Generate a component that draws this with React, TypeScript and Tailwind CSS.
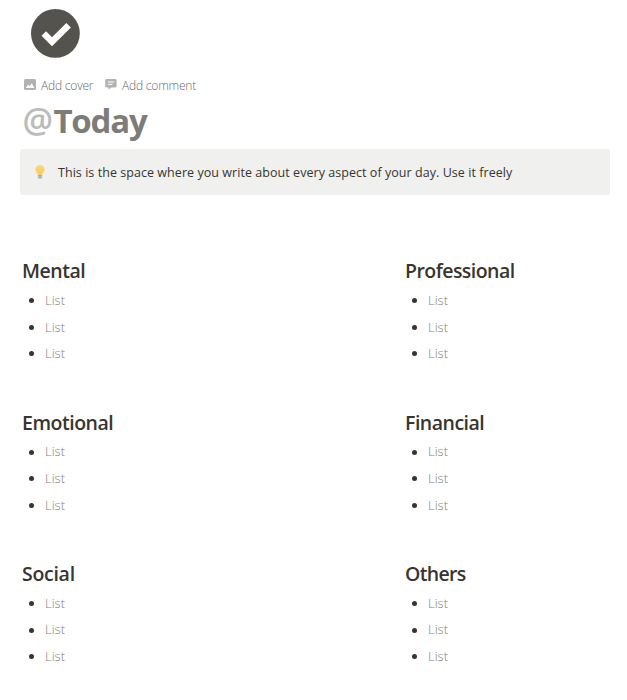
import React from "react";

type Section = {
  title: string;
  titleClass: string;
  items: string[];
};

const leftSections: Section[] = [
  { title: "Mental", titleClass: "tracking-[-0.45px]", items: ["List", "List", "List"] },
  { title: "Emotional", titleClass: "tracking-[-0.48px]", items: ["List", "List", "List"] },
  { title: "Social", titleClass: "tracking-[-0.28px]", items: ["List", "List", "List"] },
];

const rightSections: Section[] = [
  { title: "Professional", titleClass: "tracking-[-0.54px]", items: ["List", "List", "List"] },
  { title: "Financial", titleClass: "tracking-[-0.5px]", items: ["List", "List", "List"] },
  { title: "Others", titleClass: "tracking-[-0.65px]", items: ["List", "List", "List"] },
];

const CheckIcon = () => (
  <svg className="block h-[50px] w-[50px]" viewBox="0 0 50 50">
    <circle cx="25.4" cy="25.4" r="24.4" fill="#55534e" />
    <path d="M13.8 25.6 L22 33.8 L38.6 17.2" fill="none" stroke="#fff" strokeWidth="6.4" />
  </svg>
);

const CoverIcon = () => (
  <svg className="block h-[11px] w-3" viewBox="0 0 12 11">
    <rect width="12" height="11" rx="1.5" fill="#b3b2b0" />
    <path d="M1.8 9 L4.2 5.4 L5.8 7.3 L7.8 4.2 L10.4 9 Z" fill="#fff" />
  </svg>
);

const CommentIcon = () => (
  <svg className="block h-[11px] w-3" viewBox="0 0 12 11">
    <path
      d="M1.6 0 H10.2 Q11.6 0 11.6 1.4 V7 Q11.6 8.4 10.2 8.4 H6.3 L3.6 10.8 V8.4 H1.6 Q0.2 8.4 0.2 7 V1.4 Q0.2 0 1.6 0 Z"
      fill="#b3b2b0"
    />
    <path d="M2.8 3 H9.2 M2.8 5.4 H7.4" stroke="#fff" strokeWidth="1" />
  </svg>
);

const BulbIcon = () => (
  <svg className="block h-[14px] w-[10px]" viewBox="0 0 10 14">
    <path
      d="M5 0.2 C2.2 0.2 0.4 2.2 0.4 4.7 C0.4 7 2.4 8 2.8 10 H7.2 C7.6 8 9.6 7 9.6 4.7 C9.6 2.2 7.8 0.2 5 0.2 Z"
      fill="#fbd471"
    />
    <path d="M3.7 5.2 L4.4 9.8 M6.3 5.2 L5.6 9.8" stroke="#f0b959" strokeWidth="0.6" />
    <path d="M2.9 10 H7.1 V12.2 L6.2 13.4 H3.8 L2.9 12.2 Z" fill="#a3abb0" />
    <path d="M2.9 11.4 H7.1" stroke="#cfd4d6" strokeWidth="0.6" />
  </svg>
);

const SectionBlock: React.FC<{ section: Section }> = ({ section }) => (
  <section>
    <h2 className={`h-8 text-[19.5px] leading-8 font-semibold text-[#37352f] ${section.titleClass}`}>
      {section.title}
    </h2>
    <ul>
      {section.items.map((item, index) => (
        <li key={index} className="flex h-[26.6px] items-center">
          <span className="ml-[7px] h-[5px] w-[5px] rounded-full bg-[#37352f]" />
          <span className="ml-[11px] text-[13px] font-light text-[#82817c]">{item}</span>
        </li>
      ))}
    </ul>
  </section>
);

const App: React.FC = () => {
  return (
    <main className="h-[700px] w-[627px] overflow-hidden bg-white pt-2 font-['Open_Sans','Noto_Sans',sans-serif] text-[#37352f]">
      <div className="ml-[30px]">
        <CheckIcon />
      </div>

      {/* Page actions */}
      <div className="mt-4 ml-6 flex h-[21px] items-center text-[12px] font-light tracking-[-0.2px] text-[#6b6a66]">
        <CoverIcon />
        <span className="mt-[3px] ml-[5px] w-[53px] whitespace-nowrap">Add cover</span>
        <span className="ml-[11px]">
          <CommentIcon />
        </span>
        <span className="mt-[3px] ml-[5px] whitespace-nowrap">Add comment</span>
      </div>

      <h1 className="ml-[22.5px] h-[54px] text-[33px] leading-[51px] font-bold tracking-[-1.2px] text-[#7d7c78]">
        <span className="text-[34px] font-semibold tracking-[0.4px] text-[#bcbbb9]">@</span>Today
      </h1>

      {/* Callout */}
      <div className="ml-5 flex h-[46px] w-[590px] items-center rounded-[3px] bg-[#f0f0ee] pl-[15px]">
        <BulbIcon />
        <p className="mt-[3px] ml-[13px] text-[12.5px] tracking-[0.05px] whitespace-nowrap">
          This is the space where you write about every aspect of your day. Use it freely
        </p>
      </div>

      <div className="mt-[60.4px] ml-[22px] grid grid-cols-[383px_1fr]">
        <div className="flex flex-col gap-[39.7px]">
          {leftSections.map((section) => (
            <SectionBlock key={section.title} section={section} />
          ))}
        </div>
        <div className="flex flex-col gap-[39.7px]">
          {rightSections.map((section) => (
            <SectionBlock key={section.title} section={section} />
          ))}
        </div>
      </div>
    </main>
  );
};

export default App;
